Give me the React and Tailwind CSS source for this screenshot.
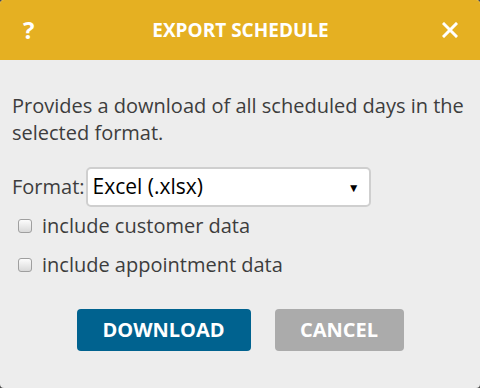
import { useState } from 'react';

// Fake checkbox that looks like the old Chrome native one
function Check({ label, checked, onToggle }) {
  return (
    <label className="flex items-center gap-[10px] h-[39px] pl-[6px] cursor-pointer">
      <span
        onClick={onToggle}
        className="w-[14px] h-[14px] rounded-[3px] border border-[#9f9f9f] bg-gradient-to-b from-[#fcfcfc] to-[#d9d9d9] flex items-center justify-center text-[10px] leading-none text-[#333]"
      >
        {checked ? '✓' : ''}
      </span>
      <span className="text-[20px] text-[#3d3d3d]">{label}</span>
    </label>
  );
}

export default function App() {
  const [format, setFormat] = useState('xlsx');
  const [customer, setCustomer] = useState(false);
  const [appointment, setAppointment] = useState(false);

  return (
    <div className="w-[480px] h-[388px] bg-[#4a4a4a]" style={{ fontFamily: '"Open Sans", sans-serif' }}>
      <div className="w-full h-full rounded-[4px] overflow-hidden bg-[#ededed] flex flex-col">
        {/* Header */}
        <div className="h-[60px] bg-[#e5b022] flex items-center justify-between pl-[23px] pr-[22px] text-white">
          <span className="text-[24px] font-bold w-[16px] leading-none">?</span>
          <h1 className="text-[19px] font-bold">EXPORT SCHEDULE</h1>
          <svg width="16" height="16" viewBox="0 0 16 16">
            <path d="M2 2 L14 14 M14 2 L2 14" stroke="white" strokeWidth="3" strokeLinecap="square" />
          </svg>
        </div>

        {/* Body */}
        <div className="px-[12px] pt-[32px]">
          <p className="text-[20px] leading-[27px] text-[#3d3d3d]">
            Provides a download of all scheduled days in the selected format.
          </p>

          <div className="flex items-center mt-[21px] h-[40px]">
            <span className="text-[20px] text-[#3d3d3d]">Format:</span>
            <div className="relative ml-[1px]">
              <select
                value={format}
                onChange={e => setFormat(e.target.value)}
                className="appearance-none w-[285px] h-[40px] bg-white border-2 border-[#cfcfcf] rounded-[5px] pl-[5px] text-[21px] text-black outline-none"
                style={{ fontFamily: '"Open Sans", sans-serif' }}
              >
                <option value="xlsx">Excel (.xlsx)</option>
                <option value="csv">CSV (.csv)</option>
              </select>
              <span className="absolute right-[11px] top-[12px] text-[12px] text-black pointer-events-none">▼</span>
            </div>
          </div>

          <div className="mt-[-1px]">
            <Check label="include customer data" checked={customer} onToggle={() => setCustomer(!customer)} />
            <Check label="include appointment data" checked={appointment} onToggle={() => setAppointment(!appointment)} />
          </div>

          <div className="flex justify-center gap-[24px] mt-[25px]">
            <button className="w-[174px] h-[42px] rounded-[4px] bg-[#00628f] text-white text-[20px] font-bold">
              DOWNLOAD
            </button>
            <button className="w-[129px] h-[42px] rounded-[4px] bg-[#ababab] text-white text-[20px] font-bold">
              CANCEL
            </button>
          </div>
        </div>
      </div>
    </div>
  );
}
